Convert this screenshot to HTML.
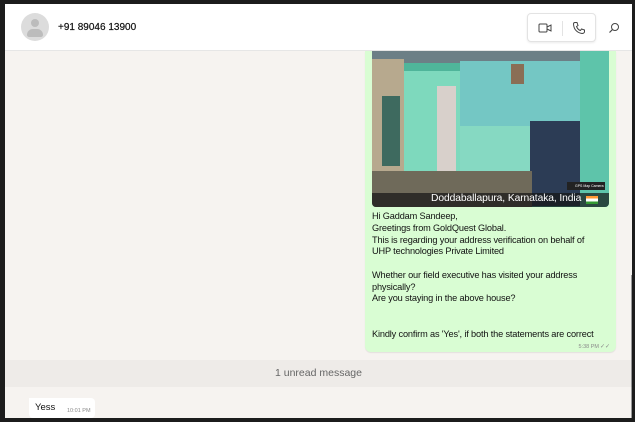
<!DOCTYPE html>
<html><head><meta charset="utf-8"><style>
*{margin:0;padding:0;box-sizing:border-box}
html,body{width:635px;height:422px;overflow:hidden;background:#1c1c1c;font-family:"Liberation Sans",sans-serif}
#app{position:absolute;left:5px;top:4px;width:627px;height:414px;background:#f6f3f0;overflow:hidden}
#hdr{position:absolute;left:0;top:0;width:627px;height:47px;background:#fff;border-bottom:1px solid #e6e6e6}
.av{position:absolute;left:16px;top:9px;width:28px;height:28px;border-radius:50%;background:#dcdcdc;overflow:hidden}
.av .h{position:absolute;left:10px;top:6px;width:8px;height:8px;border-radius:50%;background:#bcbcbc}
.av .b{position:absolute;left:6px;top:16px;width:16px;height:8px;border-radius:8px 8px 3px 3px;background:#bcbcbc}
.name{position:absolute;left:53px;top:17px;font-size:10px;color:#111;-webkit-text-stroke:0.2px #111}
.btns{position:absolute;left:522px;top:9px;width:69px;height:29px;border:1px solid #e3e3e3;border-radius:4px;background:#fff;box-shadow:0 1px 2px rgba(0,0,0,.08)}
.btns .sep{position:absolute;left:34px;top:7px;width:1px;height:15px;background:#e3e3e3}
#bub{position:absolute;left:360px;top:47px;width:251px;height:301px;background:#d9fdd3;border-radius:0 0 6px 6px;box-shadow:0 1px 1px rgba(0,0,0,.08)}
#img{position:absolute;left:7px;top:0;width:237px;height:156px;background:#4fb59a;border-radius:0 0 4px 4px;overflow:hidden}
.txt{position:absolute;left:7px;top:160px;font-size:9.2px;letter-spacing:-0.15px;line-height:11.75px;color:#111;white-space:pre}
.tm{position:absolute;right:17px;bottom:2px;font-size:5.5px;color:#8a8a8a}
.tk{position:absolute;right:6px;bottom:2px;font-size:6px;color:#8a8a8a}
#unread{position:absolute;left:0;top:356px;width:627px;height:27px;background:rgba(0,0,0,.03);text-align:center;font-size:10.5px;line-height:27px;color:#666}
#yess{position:absolute;left:24px;top:394px;width:66px;height:20px;background:#fff;border-radius:0 4px 4px 4px}
#yess span{position:absolute;left:6px;top:4px;font-size:9.5px;color:#111}
#yess i{position:absolute;left:38px;top:10px;font-size:5.5px;font-style:normal;color:#8a8a8a}
</style></head><body>
<div id="app">
 <div id="hdr">
  <div class="av"><div class="h"></div><div class="b"></div></div>
  <div class="name" style="top:18px">+91 89046 13900</div>
  <div class="btns">
   <svg style="position:absolute;left:10px;top:8px" width="14" height="12" viewBox="0 0 14 12"><rect x="1" y="2" width="8" height="8" rx="1" fill="none" stroke="#444" stroke-width="1"/><path d="M9 5 L13 3 V9 L9 7" fill="none" stroke="#444" stroke-width="1"/></svg>
   <div class="sep"></div>
   <svg style="position:absolute;left:44px;top:7px" width="14" height="14" viewBox="0 0 14 14"><path d="M3 1.5 L5 1.5 L6 4.5 L4.5 5.5 Q6 9 8.5 9.5 L9.5 8 L12.5 9 L12.5 11 Q12 12.5 10 12.5 Q2 11 1.5 3 Q1.5 1.5 3 1.5Z" fill="none" stroke="#444" stroke-width="1"/></svg>
  </div>
  <svg style="position:absolute;left:603px;top:18px" width="12" height="12" viewBox="0 0 12 12"><circle cx="7" cy="5" r="3.5" fill="none" stroke="#444" stroke-width="1"/><path d="M4.5 7.5 L1.5 10.5" stroke="#444" stroke-width="1.2"/></svg>
 </div>
 <div id="bub">
  <div id="img">
   <div style="position:absolute;left:0;top:0;width:237px;height:12px;background:#6c7f86"></div>
   <div style="position:absolute;left:0;top:8px;width:32px;height:115px;background:#b7a98e"></div>
   <div style="position:absolute;left:10px;top:45px;width:18px;height:70px;background:#3e6a5f"></div>
   <div style="position:absolute;left:32px;top:20px;width:56px;height:120px;background:#7ed9bd"></div>
   <div style="position:absolute;left:88px;top:10px;width:120px;height:75px;background:#74c7c4"></div>
   <div style="position:absolute;left:139px;top:13px;width:13px;height:20px;background:#8a6e55"></div>
   <div style="position:absolute;left:65px;top:35px;width:19px;height:85px;background:#d8d0cb"></div>
   <div style="position:absolute;left:88px;top:75px;width:70px;height:70px;background:#86d9c2"></div>
   <div style="position:absolute;left:158px;top:70px;width:50px;height:85px;background:#2c3c55"></div>
   <div style="position:absolute;left:208px;top:0;width:29px;height:156px;background:#5ec4aa"></div>
   <div style="position:absolute;left:0;top:120px;width:160px;height:36px;background:#6f6a5a"></div>
   <div style="position:absolute;left:0;top:142px;width:237px;height:14px;background:rgba(20,20,20,.7)"></div>
   <div style="position:absolute;left:59px;top:142px;font-size:10.3px;letter-spacing:-0.1px;color:#fff;white-space:nowrap">Doddaballapura, Karnataka, India</div>
   <div style="position:absolute;left:214px;top:145px;width:12px;height:8px;background:linear-gradient(#f93 33%,#fff 33% 66%,#393 66%)"></div>
   <div style="position:absolute;left:195px;top:131px;width:38px;height:8px;background:#222;font-size:3.5px;color:#fff;line-height:8px;padding-left:8px">GPS Map Camera</div>
  </div>
  <div class="txt">Hi Gaddam Sandeep,
Greetings from GoldQuest Global.
This is regarding your address verification on behalf of
UHP technologies Private Limited

Whether our field executive has visited your address
physically?
Are you staying in the above house?


Kindly confirm as 'Yes', if both the statements are correct</div>
  <div class="tm">5:38 PM</div><div class="tk">✓✓</div>
 </div>
 <div style="position:absolute;left:626px;top:271px;width:1px;height:143px;background:#999"></div>
 <div id="unread">1 unread message</div>
 <div id="yess"><span>Yess</span><i>10:01 PM</i></div>
</div>
</body></html>
